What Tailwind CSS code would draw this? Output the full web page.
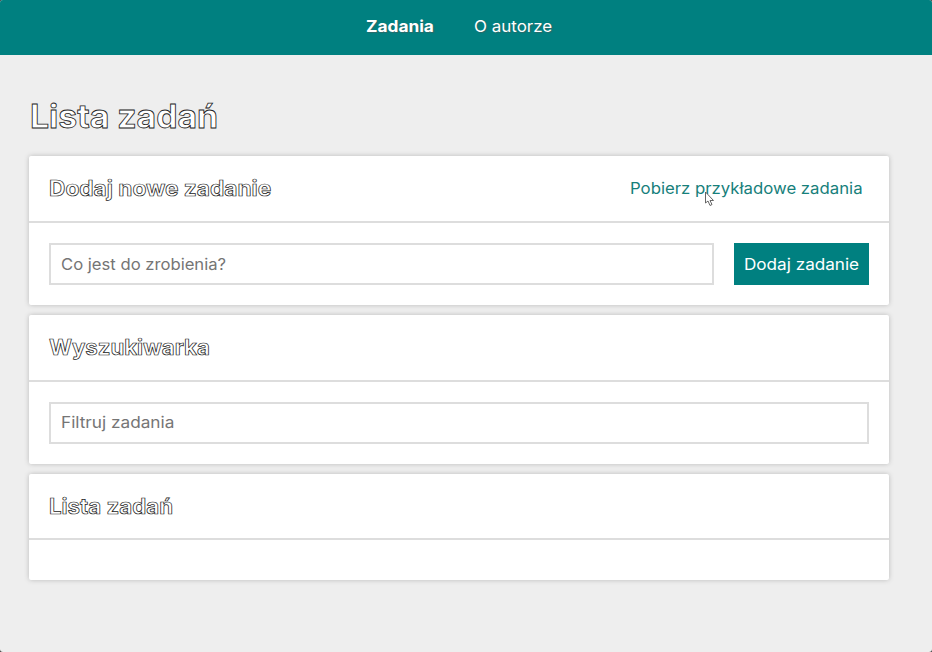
<!DOCTYPE html>
<html lang="pl" class="bg-[#444444]">
<head>
<meta charset="utf-8">
<title>Lista zadań</title>
<script src="https://cdn.jsdelivr.net/npm/@tailwindcss/browser@4"></script>
</head>
<body class="h-[652px] overflow-hidden rounded-[3px] bg-[#eeeeee] font-['Inter','Liberation_Sans',sans-serif] text-[16px] leading-5 text-black">
<nav class="flex h-[55px] justify-center gap-10 bg-[#008080] pt-4 pr-[14px] text-white [text-shadow:1px_1px_1px_#55555588]">
  <a class="w-[68px] whitespace-nowrap font-bold"><span class="inline-block origin-left scale-x-[1.08]">Zadania</span></a>
  <a class="w-[78px] whitespace-nowrap"><span class="inline-block origin-left scale-x-[1.06]">O autorze</span></a>
</nav>
<main class="ml-[29px] w-[860px] pt-[42px]">
  <h1 class="mb-[19px] h-10 whitespace-nowrap pl-px text-[32px] leading-10 font-bold text-white [-webkit-text-stroke:0.8px_#222] [text-shadow:0_0_1px_#fff]"><span class="inline-block origin-left scale-x-[1.055]">Lista zadań</span></h1>
  <section class="mb-[10px] rounded-[2px] bg-white shadow-[0_0_5px_#bbbbbb]">
    <header class="flex h-[67px] items-center justify-between border-b-2 border-[#dddddd] pr-[26px] pl-5">
      <h2 class="whitespace-nowrap text-[21px] leading-6 font-bold text-white [-webkit-text-stroke:0.7px_#222]"><span class="inline-block origin-left scale-x-[1.08]">Dodaj nowe zadanie</span></h2>
      <a class="relative w-[233px] pb-0.5 whitespace-nowrap text-[#17807b]"><span class="inline-block origin-left scale-x-[1.047]">Pobierz przykładowe zadania</span>
        <svg class="absolute top-[13px] left-[74px]" width="11" height="16" viewBox="0 0 11 16"><path d="M1.5 1v11l2.5-2 2 4.5 2-1-2-4h3.5z" fill="#fff" stroke="#555" stroke-width=".9"/></svg>
      </a>
    </header>
    <div class="flex gap-5 p-5">
      <div class="flex h-[42px] w-[665px] items-center border-2 border-[#dddddd] px-[10px] text-[#757575]"><span class="inline-block origin-left scale-x-[1.04]">Co jest do zrobienia?</span></div>
      <button class="h-[42px] w-[135px] bg-[#008080] pl-[10px] text-left whitespace-nowrap text-white"><span class="inline-block origin-left scale-x-[1.07]">Dodaj zadanie</span></button>
    </div>
  </section>
  <section class="mb-[10px] rounded-[2px] bg-white shadow-[0_0_5px_#bbbbbb]">
    <header class="flex h-[67px] items-center border-b-2 border-[#dddddd] pl-5">
      <h2 class="text-[21px] leading-6 font-bold text-white [-webkit-text-stroke:0.7px_#222]"><span class="inline-block origin-left scale-x-[1.055]">Wyszukiwarka</span></h2>
    </header>
    <div class="p-5">
      <div class="flex h-[42px] items-center border-2 border-[#dddddd] px-[10px] pb-0.5 text-[#757575]"><span class="inline-block origin-left scale-x-[1.075]">Filtruj zadania</span></div>
    </div>
  </section>
  <section class="rounded-[2px] bg-white shadow-[0_0_5px_#bbbbbb]">
    <header class="flex h-[66px] items-center border-b-2 border-[#dddddd] pl-5">
      <h2 class="pt-0.5 text-[21px] leading-6 font-bold text-white [-webkit-text-stroke:0.7px_#222]"><span class="inline-block origin-left scale-x-[1.06]">Lista zadań</span></h2>
    </header>
    <div class="h-10"></div>
  </section>
</main>
</body>
</html>
